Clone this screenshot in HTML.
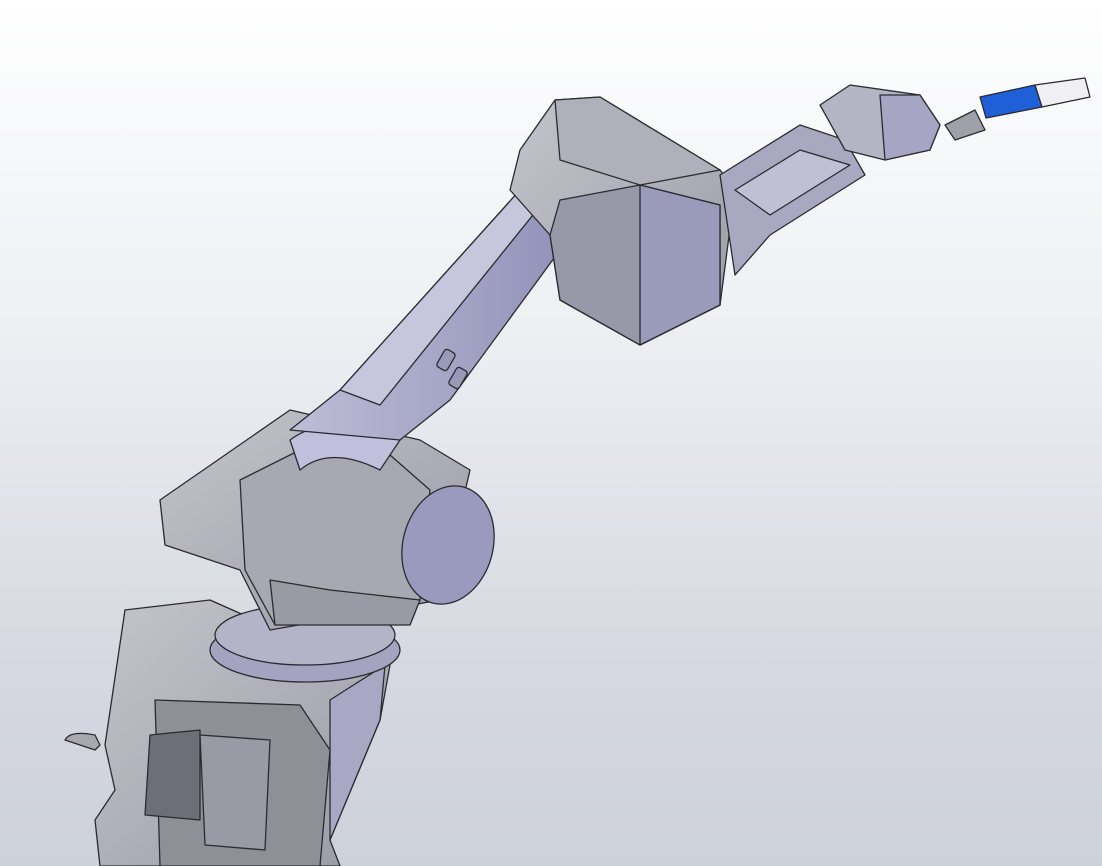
<!DOCTYPE html>
<html><head><meta charset="utf-8"><style>
html,body{margin:0;padding:0;width:1102px;height:866px;overflow:hidden}
body{background:linear-gradient(180deg,#ffffff 0%,#eceef2 40%,#d6d9e1 75%,#cdd1da 100%)}
svg{position:absolute;left:0;top:0}
</style></head><body>
<svg width="1102" height="866" viewBox="0 0 1102 866" stroke="#2a2a30" stroke-width="1.3" stroke-linejoin="round">
<defs>
<linearGradient id="g1" x1="0" y1="0" x2="1" y2="1"><stop offset="0" stop-color="#c4c4cc"/><stop offset="1" stop-color="#9a9aa6"/></linearGradient>
<linearGradient id="g2" x1="0" y1="0" x2="1" y2="0"><stop offset="0" stop-color="#bdbdd6"/><stop offset="1" stop-color="#9090b8"/></linearGradient>
</defs>
<!-- base -->
<path d="M65,740 Q70,730 95,735 L100,745 L95,750 Z" fill="#a8a8b0"/>
<path d="M100,866 L95,820 L115,790 L105,745 L125,610 L210,600 L300,640 L390,665 L380,720 L330,840 L340,866 Z" fill="url(#g1)"/>
<path d="M155,700 L300,705 L330,750 L320,866 L160,866 Z" fill="#8f8f98"/>
<path d="M150,735 L200,730 L200,820 L145,815 Z" fill="#6e6e78"/>
<path d="M200,735 L270,740 L265,850 L205,845 Z" fill="#9a9aa4"/>
<path d="M330,700 L385,665 L380,720 L330,840 Z" fill="#a8a8c4"/>
<!-- turret -->
<ellipse cx="305" cy="650" rx="95" ry="32" fill="#a4a4c0"/>
<ellipse cx="305" cy="635" rx="90" ry="30" fill="#b4b4c8"/>
<!-- shoulder -->
<path d="M160,500 L290,410 L420,440 L470,470 L440,600 L270,630 L240,570 L165,545 Z" fill="url(#g1)"/>
<path d="M240,480 L300,450 L390,455 L430,490 L420,600 L275,625 L245,570 Z" fill="#a8a8b2"/>
<path d="M290,440 Q330,410 400,440 L380,470 Q330,445 300,470 Z" fill="#c0c0dc"/>
<path d="M270,580 L330,590 L420,600 L410,625 L275,625 Z" fill="#9a9aa4"/>
<ellipse cx="448" cy="545" rx="45" ry="60" transform="rotate(15 448 545)" fill="#9a9abf"/>
<!-- upper arm -->
<path d="M290,430 L340,390 L520,190 L570,170 L580,210 L560,250 L450,400 L400,440 Z" fill="url(#g2)"/>
<path d="M340,390 L520,190 L545,200 L380,405 Z" fill="#c6c6dc"/>
<rect x="440" y="350" width="12" height="20" rx="3" transform="rotate(30 446 360)" fill="#9a9ab8"/>
<rect x="452" y="368" width="12" height="20" rx="3" transform="rotate(30 458 378)" fill="#9a9ab8"/>
<!-- elbow housing -->
<path d="M510,190 L520,150 L555,100 L600,97 L720,170 L735,190 L720,305 L640,345 L560,300 L550,235 Z" fill="url(#g1)"/>
<path d="M560,200 L640,185 L720,205 L720,305 L640,345 L560,300 L550,235 Z" fill="#9898a8"/>
<path d="M640,185 L720,205 L720,305 L640,345 Z" fill="#9a9abb"/>
<path d="M555,100 L600,97 L720,170 L640,185 L560,160 Z" fill="#b0b0ba"/>
<!-- forearm -->
<path d="M720,175 L800,125 L845,140 L865,175 L770,235 L735,275 Z" fill="#a8a8c0"/>
<path d="M735,190 L800,150 L850,165 L770,215 Z" fill="#c0c0d4"/>
<!-- wrist -->
<path d="M820,105 L850,85 L920,95 L940,125 L930,150 L885,160 L845,150 Z" fill="#b4b4c4"/>
<path d="M880,95 L920,95 L940,125 L930,150 L885,160 Z" fill="#a6a6c4"/>
<!-- tool -->
<path d="M945,125 L975,110 L985,130 L955,140 Z" fill="#a0a0a8"/>
<path d="M980,97 L1035,85 L1042,107 L986,118 Z" fill="#1f5fd8"/>
<path d="M1035,85 L1085,78 L1090,97 L1042,107 Z" fill="#f0f0f4"/>
</svg>
</body></html>
